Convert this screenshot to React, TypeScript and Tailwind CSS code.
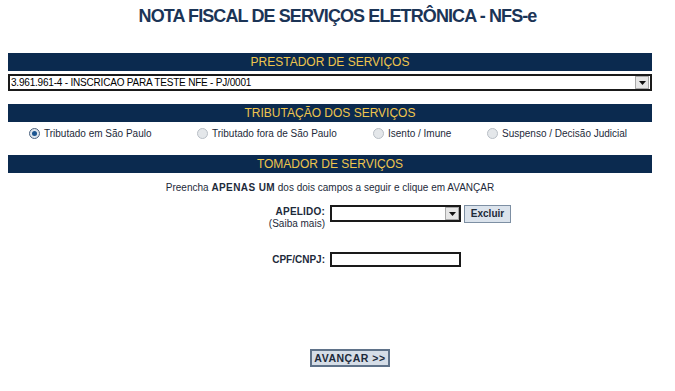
import { useState } from "react";

const font = { fontFamily: '"Liberation Sans", Arial, sans-serif' };

function SectionBar({ title }: { title: string }) {
  return (
    <div className="h-[18px] bg-[#0b2a4f] flex items-center justify-center text-[12px] leading-none text-[#eec54e] uppercase">
      {title}
    </div>
  );
}

function Radio({ checked, label, onClick }: { checked: boolean; label: string; onClick: () => void }) {
  return (
    <label className="flex items-center gap-[4px] cursor-pointer" onClick={onClick}>
      <span
        className={`w-[11px] h-[11px] rounded-full border flex items-center justify-center ${
          checked ? "border-[#4f6580] bg-[#dfe6ee]" : "border-[#b9bfc6] bg-[#e4e7ea]"
        }`}
      >
        {checked && <span className="w-[5px] h-[5px] rounded-full bg-[#1c5590]" />}
      </span>
      <span>{label}</span>
    </label>
  );
}

function Arrow() {
  return (
    <span className="w-[14px] h-[13px] bg-[#e6e6e6] border border-[#a8a8a8] flex items-center justify-center">
      <svg width="7" height="4" viewBox="0 0 7 4">
        <path d="M0 0h7L3.5 4z" fill="#111" />
      </svg>
    </span>
  );
}

export default function App() {
  const [trib, setTrib] = useState(0);
  const options = [
    "Tributado em São Paulo",
    "Tributado fora de São Paulo",
    "Isento / Imune",
    "Suspenso / Decisão Judicial",
  ];
  const radioPos = ["left-[21px]", "left-[189px]", "left-[365px]", "left-[479px]"];

  return (
    <div className="w-[675px] h-[391px] bg-white text-[#1d2a3a]" style={font}>
      <h1 className="pt-[5px] text-center text-[18px] leading-[22px] font-bold tracking-[-0.9px] text-[#1b3456]">
        NOTA FISCAL DE SERVIÇOS ELETRÔNICA - NFS-e
      </h1>

      <div className="ml-[8px] w-[644px] mt-[26px]">
        <SectionBar title="Prestador de Serviços" />
        <div className="mt-[3px] h-[17px] border-2 border-[#1a1a1a] flex items-center justify-between pl-[1px] pr-[1px]">
          <span className="text-[10px] leading-none tracking-[-0.2px] text-black">
            3.961.961-4 - INSCRICAO PARA TESTE NFE - PJ/0001
          </span>
          <Arrow />
        </div>

        <div className="mt-[13px]">
          <SectionBar title="Tributação dos Serviços" />
        </div>
        <div className="relative h-[23px] text-[10px]">
          {options.map((o, i) => (
            <div key={o} className={`absolute top-[4px] ${radioPos[i]}`}>
              <Radio checked={trib === i} label={o} onClick={() => setTrib(i)} />
            </div>
          ))}
        </div>

        <div className="mt-[10px]">
          <SectionBar title="Tomador de Serviços" />
        </div>
        <p className="mt-[8px] text-center text-[10px] leading-[13px]">
          Preencha <b className="tracking-[0.04em]">APENAS UM</b> dos dois campos a seguir e clique em AVANÇAR
        </p>

        <div className="mt-[11px] flex items-start gap-[5px]">
          <div className="w-[317px] text-right text-[10px] leading-[12px] pt-[1px]">
            <div className="font-bold tracking-[0.02em]">APELIDO:</div>
            <div>(Saiba mais)</div>
          </div>
          <div className="w-[131px] h-[17px] border-2 border-[#1a1a1a] flex items-center justify-end">
            <Arrow />
          </div>
          <button className="ml-[-2px] w-[47px] h-[18px] bg-[#dbe3ec] border border-[#7d8fa3] text-[10px] font-bold text-[#1d2a3a] leading-none">
            Excluir
          </button>
        </div>

        <div className="mt-[22px] flex items-center gap-[5px]">
          <div className="w-[317px] text-right text-[10px] font-bold">CPF/CNPJ:</div>
          <div className="w-[131px] h-[15px] border-2 border-[#1a1a1a]" />
        </div>

        <div className="mt-[78px] pl-[302px]">
          <button className="w-[80px] h-[18px] bg-[#d5dde7] border-2 border-[#5f7289] text-[10.5px] font-bold text-[#1d2a3a] leading-none tracking-[0.05em]">
            AVANÇAR &gt;&gt;
          </button>
        </div>
      </div>
    </div>
  );
}
